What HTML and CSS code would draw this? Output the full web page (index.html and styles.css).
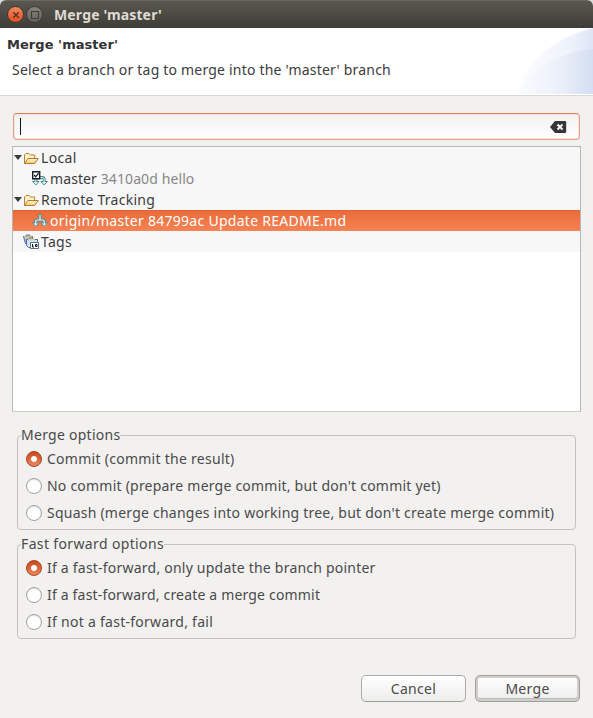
FILE: index.html
```html
<!DOCTYPE html>
<html lang="en">
<head>
<meta charset="utf-8">
<title>Merge 'master'</title>
<link rel="stylesheet" href="styles.css">
</head>
<body>
<svg class="defs" width="0" height="0" aria-hidden="true">
  <defs>
    <linearGradient id="fold" x1="0" y1="0" x2="0" y2="1"><stop offset="0" stop-color="#fff5d2"/><stop offset="1" stop-color="#f5cb77"/></linearGradient>
    <linearGradient id="blue" x1="0" x2="1"><stop offset="0" stop-color="#f9fbfe"/><stop offset=".5" stop-color="#ebf0fa"/><stop offset="1" stop-color="#d0dcf2"/></linearGradient>
    <symbol id="folder" viewBox="0 0 16 16">
      <path d="M1.500 13.500V5L3 3.500h3L7.500 5h4.200v3" fill="#fff2c9" stroke="#b98236"/>
      <path d="M1.500 13.500 5 8.500h10.300l-3.600 5z" fill="url(#fold)" stroke="#b57a2c" stroke-linejoin="round"/>
    </symbol>
    <symbol id="branch" viewBox="0 0 16 16">
      <path d="M8 1v6M3.500 10.500V9Q3.500 7 5.500 7h5q2 0 2 2v1.500" fill="none" stroke="#508e96" stroke-width="3"/>
      <path d="M.6 10h6.400l-3.200 3.500zM9 10h6.400l-3.200 3.500z" fill="#dff5f3" stroke="#508e96"/>
      <path d="M8 2v5M3.700 11V9Q3.700 7 5.500 7h5q1.800 0 1.800 2v2" fill="none" stroke="#e4f7f5" stroke-width="1.200"/>
    </symbol>
  </defs>
</svg>
<div class="window">
  <header class="titlebar">
    <span class="ctl close"><svg width="16" height="16" viewBox="0 0 16 16"><path d="m5.200 5.200 5.600 5.600m0-5.600-5.600 5.600" fill="none" stroke="#46352b" stroke-width="1.300"/></svg></span>
    <span class="ctl max"><svg width="16" height="16" viewBox="0 0 16 16"><path d="M4.500 4.500h7v7h-7z" fill="none" stroke="#403f3a" stroke-width="1.200"/></svg></span>
    <span class="title">Merge 'master'</span>
  </header>
  <section class="banner">
    <div class="words">
      <h1>Merge 'master'</h1>
      <p class="message">Select a branch or tag to merge into the 'master' branch</p>
    </div>
    <svg class="swoosh" width="75" height="66" viewBox="0 0 75 66">
      <path d="M0 66C5 35 37 9 75 0v66z" fill="url(#blue)" opacity=".6"/>
      <path d="M42 30C48 18 58 7 75 0v66H42z" fill="url(#blue)" opacity=".35"/>
      <path d="M0 66C11 42 39 25 75 21v45z" fill="url(#blue)" opacity=".75"/>
    </svg>
  </section>
  <main>
    <div class="search">
      <span class="caret"></span>
      <svg width="17" height="12" viewBox="0 0 17 12"><path d="M0 6 5 0h10q1.200 0 1.200 1.200v9.600q0 1.200-1.200 1.200H5z" fill="#353535"/><path d="m7.500 3.500 5 5m0-5-5 5" stroke="#fff" stroke-width="2"/></svg>
    </div>
    <div class="tree">
      <div class="row"><i class="arrow"></i><svg class="icon"><use href="#folder"/></svg><span class="t-local">Local</span></div>
      <div class="row child"><svg class="icon" viewBox="0 0 16 16"><path d="M4 7v5M7 6.500h3.500q1.700 0 1.700 2V11" fill="none" stroke="#508e96" stroke-width="3"/><path d="M.6 10.500h6.400l-3.200 3.500zM9 10.500h6.400l-3.200 3.500z" fill="#dff5f3" stroke="#508e96"/><path d="M3.800 7v5M7 6.500h3.500q1.700 0 1.700 2V12" fill="none" stroke="#dff5f3"/><path d="M.7.700h7v7h-7z" fill="#fff" stroke="#111a26" stroke-width="1.400"/><path d="m2.200 4 1.500 1.800L6.600 2.200" fill="none" stroke="#111a26" stroke-width="1.300"/></svg><span class="t-master">master <em>3410a0d hello</em></span></div>
      <div class="row"><i class="arrow"></i><svg class="icon"><use href="#folder"/></svg><span class="t-remote">Remote Tracking</span></div>
      <div class="row child selected"><svg class="icon"><use href="#branch"/></svg><span class="t-origin">origin/master 84799ac Update README.md</span></div>
      <div class="row leaf"><svg class="icon" viewBox="0 0 16 16"><path d="M.5 2.500h2l1-1.500h3l1 1.500h2v7h-7z" fill="#a9c6e8" stroke="#4a6c9c"/><path d="M1 3h8" stroke="#d9c477" stroke-width="1.500"/><path d="M3.500 5.500h2l1-1.500h3l1 1.500h4v8h-9l-2-2z" fill="#cfe2f5" stroke="#4a6c9c"/><path d="M5 5.500h7" stroke="#e4cc78" stroke-width="1.500"/><path d="M7.500 8.500h8v6h-8z" fill="#fff" stroke="#607186"/><path d="M9.500 10v3h1.500M12.500 10.500h1.500v2h-1.500z" fill="none" stroke="#111"/></svg><span class="t-tags">Tags</span></div>
    </div>
    <fieldset class="group merge">
      <legend class="t-mo">Merge options</legend>
      <label><i class="radio on"></i><span class="t-m1">Commit (commit the result)</span></label>
      <label><i class="radio"></i><span class="t-m2">No commit (prepare merge commit, but don't commit yet)</span></label>
      <label><i class="radio"></i><span class="t-m3">Squash (merge changes into working tree, but don't create merge commit)</span></label>
    </fieldset>
    <fieldset class="group">
      <legend class="t-fo">Fast forward options</legend>
      <label><i class="radio on"></i><span class="t-f1">If a fast-forward, only update the branch pointer</span></label>
      <label><i class="radio"></i><span class="t-f2">If a fast-forward, create a merge commit</span></label>
      <label><i class="radio"></i><span class="t-f3">If not a fast-forward, fail</span></label>
    </fieldset>
  </main>
  <footer><button><span class="t-cancel">Cancel</span></button><button class="default"><span class="t-merge">Merge</span></button></footer>
</div>
</body>
</html>
```
FILE: styles.css
```css
* { box-sizing: border-box; }
body { margin: 0; background: #d8dadd; color: #4a4a4a; font: 14px/21px "Noto Sans", sans-serif; overflow: hidden; }
.defs { position: absolute; }
.window { width: 593px; height: 718px; display: flex; flex-direction: column; background: #f2f1f0; border-radius: 6px 6px 0 0; overflow: hidden; }
span, legend, p, h1 { white-space: nowrap; }
.titlebar { height: 28px; flex: none; display: flex; align-items: center; padding: 0 0 0 7px; background: linear-gradient(#5a574f, #3e3d38); border-top: 1px solid #6b685e; }
.ctl { width: 17px; height: 17px; margin-right: 2px; border-radius: 50%; display: flex; align-items: center; justify-content: center; border: 1px solid #3a3934; }
.ctl svg { flex: none; }
.close { background: linear-gradient(#f6865f, #e54d1e); }
.max { background: linear-gradient(#85837b, #65635b); }
.title { margin-left: 9px; color: #dfdbd2; font-weight: 700; letter-spacing: .15px; }
.banner { height: 68px; flex: none; display: flex; justify-content: space-between; background: #fff; border-bottom: 1px solid #d9d8d7; }
.words { padding: 7px 0 0 7px; }
h1 { margin: 0; font: 700 13px/20px "DejaVu Sans", sans-serif; color: #333; letter-spacing: .05px; }
.message { margin: 4px 0 0 5px; color: #3c3c3c; letter-spacing: .2px; }
.swoosh { display: block; }
main { padding: 17px 12px 0; }
.search { height: 27px; margin: 0 1px; display: flex; align-items: center; justify-content: space-between; padding: 0 12px 0 6px; border: 1px solid #e7a083; border-top-color: #dc7e58; border-radius: 4px; background: linear-gradient(#f2f1f0, #fff); box-shadow: inset 0 0 0 1px #f6e4dc; }
.caret { width: 1px; height: 17px; background: #111; }
.tree { height: 266px; margin-top: 6px; border: 1px solid #b9b7b4; border-bottom-color: #cfcdca; background: #fff; }
.row { height: 21px; display: flex; align-items: center; background: #f7f7f7; color: #3c3c3c; }
.arrow { width: 8px; height: 5px; margin: 0 1px 0 1px; background: #3c3c3c; clip-path: polygon(0 0, 100% 0, 50% 100%); }
.icon { width: 16px; height: 16px; flex: none; margin-right: 2px; }
.child { padding-left: 19px; }
.leaf { padding-left: 10px; }
.selected { background: linear-gradient(#dd6435 1px, #ea6b3a 1px, #f58355); color: #fff; }
em { font-style: normal; color: #888; }
.group { height: 105px; margin: 12px 5px 0; padding: 0 0 0 8px; border: 1px solid #c4c3c1; border-radius: 4px; min-width: 0; }
.group { height: 106px; }
.merge + .group { margin-top: 3px; }
legend { margin-left: -5px; padding: 0; height: 23px; }
label { display: flex; align-items: center; height: 27px; }
legend + label { margin-top: -2px; }
.radio { width: 16px; height: 16px; flex: none; margin-right: 5px; border-radius: 50%; border: 1px solid #a3a2a0; background: #fff; box-shadow: inset 0 1px 1px #ddd; }
.on { border-color: #a8421f; background: radial-gradient(circle, #fff 2.5px, transparent 3.5px), linear-gradient(#c9481c, #ed8660); box-shadow: none; }
.t-master { letter-spacing: .1px; }
.t-local { letter-spacing: .35px; }
.t-tags { letter-spacing: .25px; }
.t-origin { letter-spacing: .28px; }
.t-remote { letter-spacing: .25px; }
.t-mo, .t-m1, .t-f3 { letter-spacing: .27px; }
.t-m2, .t-f1 { letter-spacing: .22px; }
.t-m3 { letter-spacing: .23px; }
.t-fo { letter-spacing: .36px; }
.t-f2 { letter-spacing: .18px; }
.t-cancel { letter-spacing: .3px; }
.t-merge { letter-spacing: .3px; }
footer { display: flex; gap: 9px; justify-content: flex-end; margin-top: auto; padding: 0 13px 16px 0; }
button { width: 105px; height: 27px; padding: 0; font: inherit; color: #4a4a4a; border: 1px solid #acaba9; border-bottom-color: #9c9b99; border-radius: 5px; background: linear-gradient(#fff, #ededec); }
.default { border-color: #a09f9d; box-shadow: inset 0 0 0 2px #cfcecc, inset 0 -1px 0 2px #bbb; }
```
